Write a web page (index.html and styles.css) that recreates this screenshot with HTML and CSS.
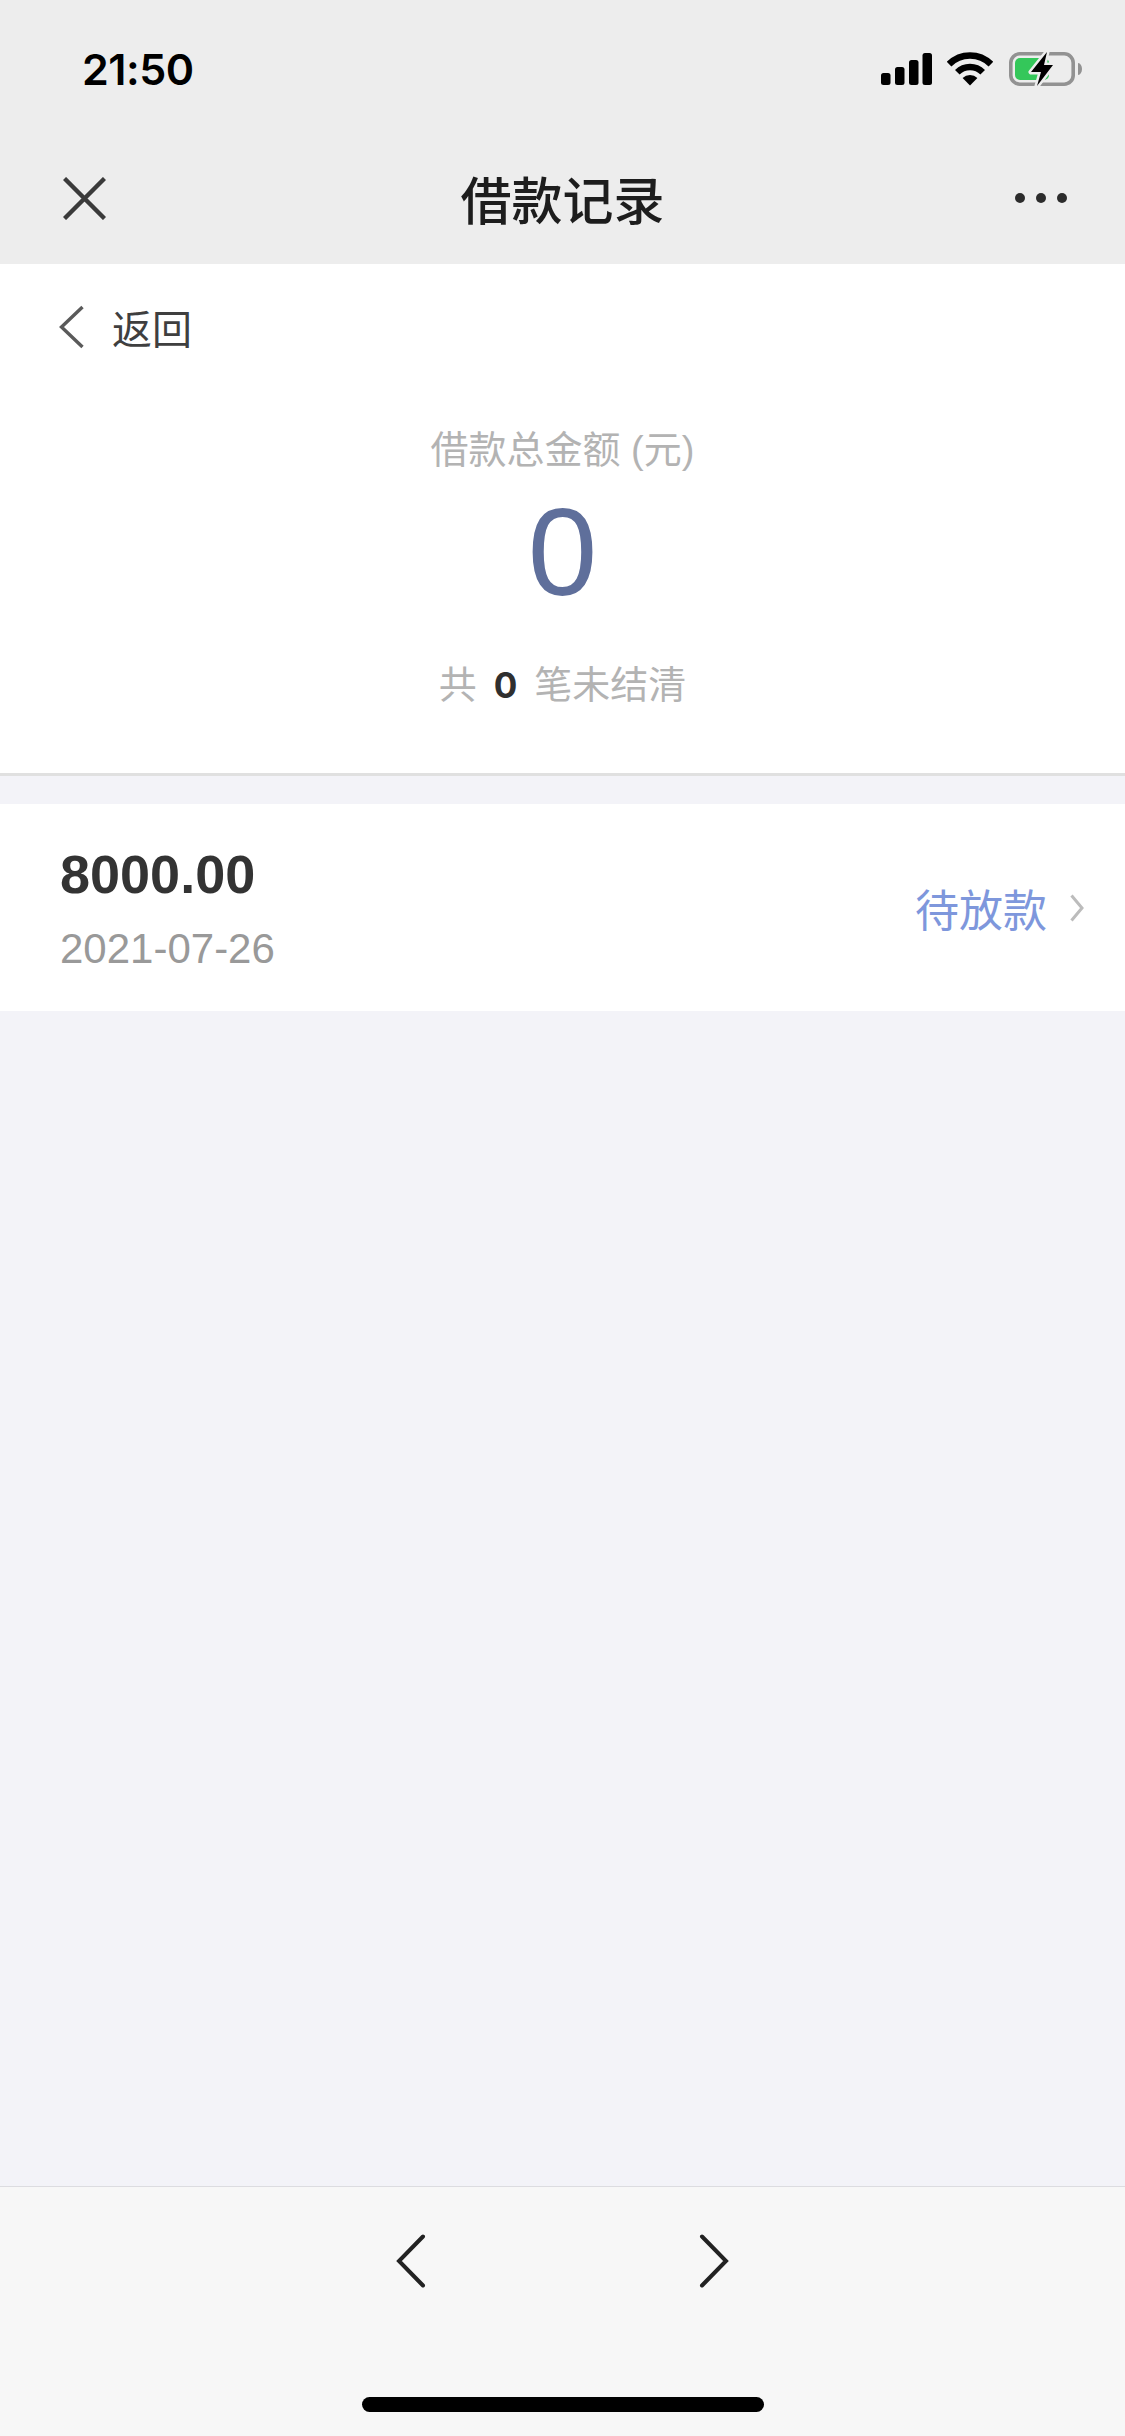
FILE: index.html
```html
<!DOCTYPE html>
<html lang="zh-CN">
<head>
<meta charset="utf-8">
<title>借款记录</title>
<link rel="stylesheet" href="styles.css">
</head>
<body>
<div class="page">
  <header class="top">
    <div class="status">
      <span class="time">21:50</span>
      <div class="status-icons">
        <svg class="signal" width="51" height="32" viewBox="0 0 51 32"><rect x="0" y="20" width="9.5" height="12" rx="2.5"/><rect x="14" y="14" width="9.5" height="18" rx="2.5"/><rect x="28" y="7" width="9.5" height="25" rx="2.5"/><rect x="41.5" y="0" width="9.5" height="32" rx="2.5"/></svg>
        <svg class="wifi" width="46" height="34" viewBox="0 0 46 34"><path d="M2.1 12.1a29.5 29.5 0 0 1 41.8 0" fill="none" stroke="#000" stroke-width="6.5"/><path d="M10.3 20.3a18 18 0 0 1 25.4 0" fill="none" stroke="#000" stroke-width="6.5"/><path d="M23 33.5 15.6 26.1a10.5 10.5 0 0 1 14.8 0z"/></svg>
        <svg class="battery" width="74" height="36" viewBox="0 0 74 36"><rect x="2.8" y="2.8" width="62.4" height="30.4" rx="9" fill="none" stroke="#929292" stroke-width="3.6"/><path d="M70 12c2.500.3 4 2.800 4 6s-1.500 5.700-4 6z" fill="#929292"/><rect x="7" y="7" width="34" height="22" rx="5" fill="#34c75a"/><path id="bolt" d="M39 1 23 21h10l-4 14 16-21h-9z" fill="#000" stroke="#ededed" stroke-width="5" paint-order="stroke" stroke-linejoin="round"/></svg>
      </div>
    </div>
    <nav class="nav">
      <svg class="close" width="43" height="43" viewBox="0 0 43 43"><path d="M1.500 1.500 41.500 41.500M41.500 1.500 1.500 41.500" fill="none" stroke="#3a3a3a" stroke-width="4.400"/></svg>
      <h1 class="title">借款记录</h1>
      <div class="dots"><i class="dot"></i><i class="dot"></i><i class="dot"></i></div>
    </nav>
  </header>

  <main class="main">
    <section class="summary">
      <div class="back">
        <svg width="25" height="44" viewBox="0 0 25 44"><path d="M23.500 2 2.500 22 23.500 42" fill="none" stroke="#5a5a5a" stroke-width="3.400"/></svg>
        <span class="back-text">返回</span>
      </div>
      <div class="label">借款总金额 (元)</div>
      <div class="total">0</div>
      <div class="count">共<b class="count-num">0</b>笔未结清</div>
    </section>

    <section class="loan">
      <div class="loan-info">
        <div class="amount">8000.00</div>
        <div class="date">2021-07-26</div>
      </div>
      <div class="loan-state">
        <span class="state-text">待放款</span>
        <svg width="14" height="28" viewBox="0 0 14 28"><path d="M1.500 1.500 12 14 1.500 26.500" fill="none" stroke="#bcbcbc" stroke-width="3"/></svg>
      </div>
    </section>
  </main>

  <footer class="bottom">
    <div class="toolbar">
      <svg width="30" height="54" viewBox="0 0 30 54"><path d="M27 2.500 3 27 27 51.500" fill="none" stroke="#222" stroke-width="4" stroke-linecap="round"/></svg>
      <svg width="30" height="54" viewBox="0 0 30 54"><path d="M3 2.500 27 27 3 51.500" fill="none" stroke="#222" stroke-width="4" stroke-linecap="round"/></svg>
    </div>
    <div class="home"></div>
  </footer>
</div>
</body>
</html>
```

FILE: styles.css
```css
* { box-sizing: border-box; }
html, body { margin: 0; padding: 0; }
body {
  width: 1125px;
  height: 2436px;
  overflow: hidden;
  font-family: "Liberation Sans", "Noto Sans CJK SC", sans-serif;
  background: #f3f3f8;
}
svg { display: block; flex: none; }
.page { height: 2436px; display: flex; flex-direction: column; }

.top { height: 264px; background: #ededed; flex: none; }
.status {
  height: 132px;
  padding: 6px 43px 0 82px;
  display: flex;
  align-items: center;
  justify-content: space-between;
}
.time { font-family: Inter, sans-serif; font-weight: 600; font-size: 43px; color: #000; letter-spacing: -0.5px; }
.status-icons { display: flex; align-items: center; gap: 15px; }
.nav {
  height: 132px;
  padding: 0 58px 0 63px;
  display: grid;
  grid-template-columns: 1fr auto 1fr;
  align-items: center;
}
.title {
  margin: 0 5px 0 0;
  font-family: "Noto Sans CJK SC", sans-serif;
  font-weight: 500;
  font-size: 51px;
  line-height: 70px;
  color: #1d1d1d;
}
.dots { display: flex; justify-content: flex-end; gap: 11px; }
.dot { width: 10px; height: 10px; border-radius: 50%; background: #2c2c2c; }

.main { flex: 1; }
.summary {
  height: 512px;
  padding-top: 40px;
  background: #fff;
  border-bottom: 3px solid #e0e0e0;
  text-align: center;
}
.back { display: flex; align-items: center; gap: 28px; padding-left: 59px; height: 46px; }
.back-text { font-family: "Noto Sans CJK SC", sans-serif; font-size: 40px; line-height: 46px; color: #3f3f3f; }
.label {
  margin-top: 75px;
  font-size: 38px;
  line-height: 50px;
  color: #b3b3b3;
}
.total {
  margin-top: 12px;
  font-size: 125px;
  line-height: 130px;
  color: #5f6f9b;
}
.count {
  margin-top: 43px;
  font-size: 38px;
  line-height: 50px;
  color: #b3b3b3;
}
.count-num { margin: 0 17px; font-family: Inter, sans-serif; font-size: 35px; font-weight: 700; color: #2f2f2f; }

.loan {
  margin-top: 28px;
  height: 207px;
  padding: 0 41px 0 60px;
  background: #fff;
  display: flex;
  align-items: center;
  justify-content: space-between;
}
.loan-info { display: flex; flex-direction: column; gap: 20px; }
.amount { font-size: 54px; line-height: 62px; font-weight: 700; color: #333; }
.date { font-size: 42px; line-height: 48px; color: #999; }
.loan-state { display: flex; align-items: center; gap: 23px; }
.state-text {
  font-family: "Noto Sans CJK SC", sans-serif;
  font-size: 44px;
  line-height: 60px;
  color: #7e97dc;
}

.bottom {
  height: 250px;
  flex: none;
  background: #f7f7f7;
  border-top: 1px solid #dcdce0;
  display: flex;
  flex-direction: column;
  align-items: center;
}
.toolbar {
  margin-top: 47px;
  width: 333px;
  display: flex;
  justify-content: space-between;
}
.home {
  margin-top: 109px;
  width: 402px;
  height: 15px;
  border-radius: 8px;
  background: #000;
}
```
